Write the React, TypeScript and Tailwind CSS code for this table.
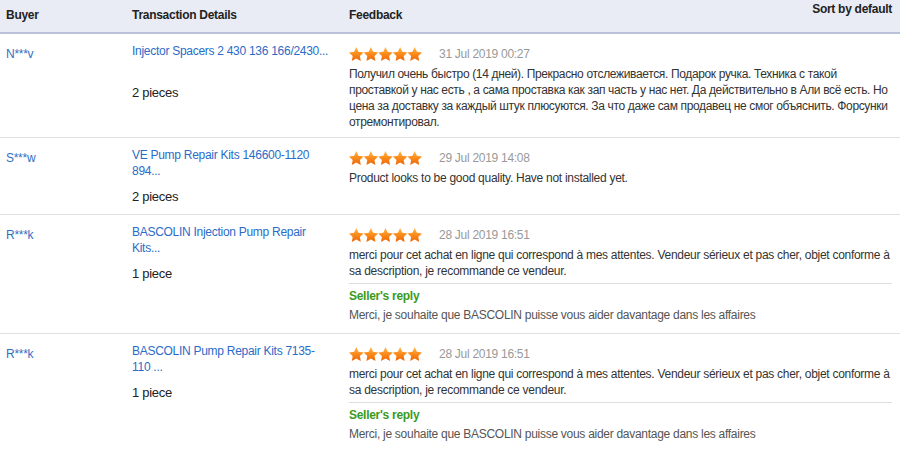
import React from 'react';

type Review = {
  buyer: string;
  product: string;
  qty: string;
  date: string;
  text: string;
  ru?: boolean;
  reply?: string;
};

const reviews: Review[] = [
  {
    buyer: 'N***v',
    product: 'Injector Spacers 2 430 136 166/2430...',
    qty: '2 pieces',
    date: '31 Jul 2019 00:27',
    ru: true,
    text: 'Получил очень быстро (14 дней). Прекрасно отслеживается. Подарок ручка. Техника с такой проставкой у нас есть , а сама проставка как зап часть у нас нет. Да действительно в Али всё есть. Но цена за доставку за каждый штук плюсуются. За что даже сам продавец не смог объяснить. Форсунки отремонтировал.',
  },
  {
    buyer: 'S***w',
    product: 'VE Pump Repair Kits 146600-1120 894...',
    qty: '2 pieces',
    date: '29 Jul 2019 14:08',
    text: 'Product looks to be good quality. Have not installed yet.',
  },
  {
    buyer: 'R***k',
    product: 'BASCOLIN Injection Pump Repair Kits...',
    qty: '1 piece',
    date: '28 Jul 2019 16:51',
    text: 'merci pour cet achat en ligne qui correspond à mes attentes. Vendeur sérieux et pas cher, objet conforme à sa description, je recommande ce vendeur.',
    reply: 'Merci, je souhaite que BASCOLIN puisse vous aider davantage dans les affaires',
  },
  {
    buyer: 'R***k',
    product: 'BASCOLIN Pump Repair Kits 7135-110 ...',
    qty: '1 piece',
    date: '28 Jul 2019 16:51',
    text: 'merci pour cet achat en ligne qui correspond à mes attentes. Vendeur sérieux et pas cher, objet conforme à sa description, je recommande ce vendeur.',
    reply: 'Merci, je souhaite que BASCOLIN puisse vous aider davantage dans les affaires',
  },
];

// fat 5-point star, ~15x14
const STAR = '7.3,0.1 9.5,4.7 14.6,5.5 10.9,9 11.8,14 7.3,11.6 2.8,14 3.7,9 0,5.5 5.1,4.7';

const Stars = () => (
  <svg width="74" height="14" viewBox="0 0 74 14">
    <defs>
      <linearGradient id="starFill" x1="0" y1="0" x2="0" y2="1">
        <stop offset="0%" stopColor="#ffba4c" />
        <stop offset="50%" stopColor="#fb8a1a" />
        <stop offset="100%" stopColor="#ea6606" />
      </linearGradient>
    </defs>
    {[0, 1, 2, 3, 4].map(i => (
      <polygon key={i} points={STAR} transform={`translate(${i * 14.6} 0)`} fill="url(#starFill)" />
    ))}
  </svg>
);

const Row = ({ r }: { r: Review }) => (
  <div className="grid grid-cols-[132px_217px_1fr] border-b border-[#e0e0e0]">
    <div className="pl-[6px] pt-[12px] text-[12px] leading-4 text-[#2f6fc6]">{r.buyer}</div>
    <div className="pt-[9px] pr-[17px] pb-[8px]">
      <div className="h-[32px] text-[12px] leading-4 text-[#2a6cc8]">{r.product}</div>
      <div className="mt-[9px] text-[13px] leading-[18px] text-[#222]">{r.qty}</div>
    </div>
    <div className="pt-[13px] pr-[8px] pb-[7px]">
      <div className="flex items-center gap-[16px] h-[14px]">
        <Stars />
        <span className="text-[12px] leading-4 text-[#999]">{r.date}</span>
      </div>
      <p
        className={
          r.ru
            ? 'mt-[5px] text-[12px] leading-4 tracking-[-0.35px] text-[#333]'
            : 'mt-[5px] text-[12px] leading-4 text-[#333]'
        }
      >
        {r.text}
      </p>
      {r.reply && (
        <div className="mt-[4px] border-t border-[#dddddd] pt-[4px] pb-[3px]">
          <div className="text-[12px] leading-4 font-bold text-[#3a9a1c]">Seller's reply</div>
          <div className="mt-[3px] text-[12px] leading-4 text-[#555]">{r.reply}</div>
        </div>
      )}
    </div>
  </div>
);

export default function App() {
  return (
    <div className="w-[900px] h-[450px] overflow-hidden bg-white tracking-[-0.28px] font-['Liberation_Sans',Arial,sans-serif]">
      <div className="grid grid-cols-[132px_217px_1fr] h-[34px] bg-[#e9ecf4] border-b-2 border-[#b9c2d8] text-[12px] leading-4 font-bold text-[#222]">
        <div className="pl-[6px] pt-[7px]">Buyer</div>
        <div className="pt-[7px]">Transaction Details</div>
        <div className="flex justify-between pr-[8px]">
          <span className="pt-[7px]">Feedback</span>
          <span className="pt-[1px]">Sort by default</span>
        </div>
      </div>
      {reviews.map((r, i) => (
        <Row key={i} r={r} />
      ))}
    </div>
  );
}
